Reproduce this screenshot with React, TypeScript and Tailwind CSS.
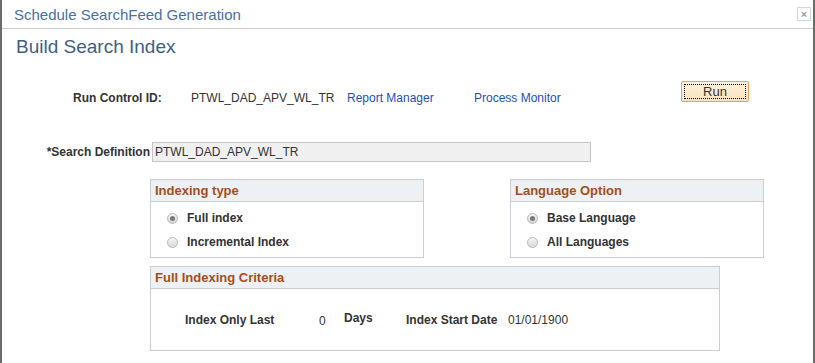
import React from 'react';

function Radio({ checked, label }: { checked?: boolean; label: string }) {
  return (
    <div className="flex h-[24px] items-center pl-[16px]">
      <span className="flex h-[11px] w-[11px] items-center justify-center rounded-full border border-[#b8b8b8] bg-gradient-to-b from-[#f4f4f4] to-[#d8d8d8]">
        {checked && <span className="h-[5px] w-[5px] rounded-full bg-[#7a7a7a]" />}
      </span>
      <span className="ml-[9px] text-[12px] font-bold text-[#333]">{label}</span>
    </div>
  );
}

function GroupBox({ title, className, children }: { title: string; className: string; children: React.ReactNode }) {
  return (
    <div className={`border border-[#cbcfd3] ${className}`}>
      <div className="flex h-[22px] items-center border-b border-[#cbcfd3] bg-[#eef1f3] pl-[4px] text-[13px] font-bold text-[#a24f1b]">
        {title}
      </div>
      {children}
    </div>
  );
}

export default function App() {
  return (
    <div
      className="h-[363px] w-[815px] overflow-hidden border-x-2 border-[#6b6b6b] bg-white text-[12px] text-[#333]"
      style={{ fontFamily: '"Liberation Sans", Arial, sans-serif' }}
    >
      <div className="flex h-[29px] items-start justify-between border-b border-[#c9cdd2] pl-[12px] pr-[2px]">
        <span className="pt-[6px] text-[15px] leading-[18px] text-[#4670a6]">Schedule SearchFeed Generation</span>
        <span className="mt-[7px] flex h-[14px] w-[14px] items-center justify-center border border-[#d4d4d4] text-[11px] font-bold leading-none text-[#8da0b5]">
          ×
        </span>
      </div>

      <h1 className="ml-[14px] mt-[7px] text-[19px] leading-[22px] text-[#3f5e86]">Build Search Index</h1>

      <div className="mt-[23px] flex">
        <div className="w-[189px] pl-[71px] pt-[10px] font-bold leading-[14px]">Run Control ID:</div>
        <div className="w-[156px] pt-[10px] leading-[14px]">PTWL_DAD_APV_WL_TR</div>
        <div className="w-[127px] pt-[10px] leading-[14px] text-[#1f4fb5]">Report Manager</div>
        <div className="w-[207px] pt-[10px] leading-[14px] text-[#1f4fb5]">Process Monitor</div>
        <button className="h-[21px] w-[68px] rounded-[2px] border border-[#e0a36a] bg-gradient-to-b from-[#fdf1dc] to-[#f9e2bd] p-[2px]">
          <span className="flex h-full w-full items-center justify-center border border-dotted border-black text-[13px] leading-none text-[#333]">
            Run
          </span>
        </button>
      </div>

      <div className="mt-[37px] flex items-center">
        <div className="w-[150px] pr-[2px] text-right font-bold">*Search Definition</div>
        <div className="flex h-[20px] w-[439px] items-center border border-[#c4c4c4] bg-[#f0f0f0] pl-[2px] text-[12px]">
          PTWL_DAD_APV_WL_TR
        </div>
      </div>

      <div className="ml-[148px] mt-[17px] flex gap-[86px]">
        <GroupBox title="Indexing type" className="h-[79px] w-[274px]">
          <div className="pt-[4px]">
            <Radio checked label="Full index" />
            <Radio label="Incremental Index" />
          </div>
        </GroupBox>
        <GroupBox title="Language Option" className="h-[79px] w-[254px]">
          <div className="pt-[4px]">
            <Radio checked label="Base Language" />
            <Radio label="All Languages" />
          </div>
        </GroupBox>
      </div>

      <GroupBox title="Full Indexing Criteria" className="ml-[148px] mt-[8px] h-[85px] w-[570px]">
        <div className="flex pt-[22px] text-[12px] leading-[14px]">
          <div className="w-[168px] pl-[34px] pt-[2px] font-bold">Index Only Last</div>
          <div className="w-[25px] pt-[3px]">0</div>
          <div className="w-[62px] font-bold">Days</div>
          <div className="w-[102px] pt-[2px] font-bold">Index Start Date</div>
          <div className="pt-[2px]">01/01/1900</div>
        </div>
      </GroupBox>
    </div>
  );
}
